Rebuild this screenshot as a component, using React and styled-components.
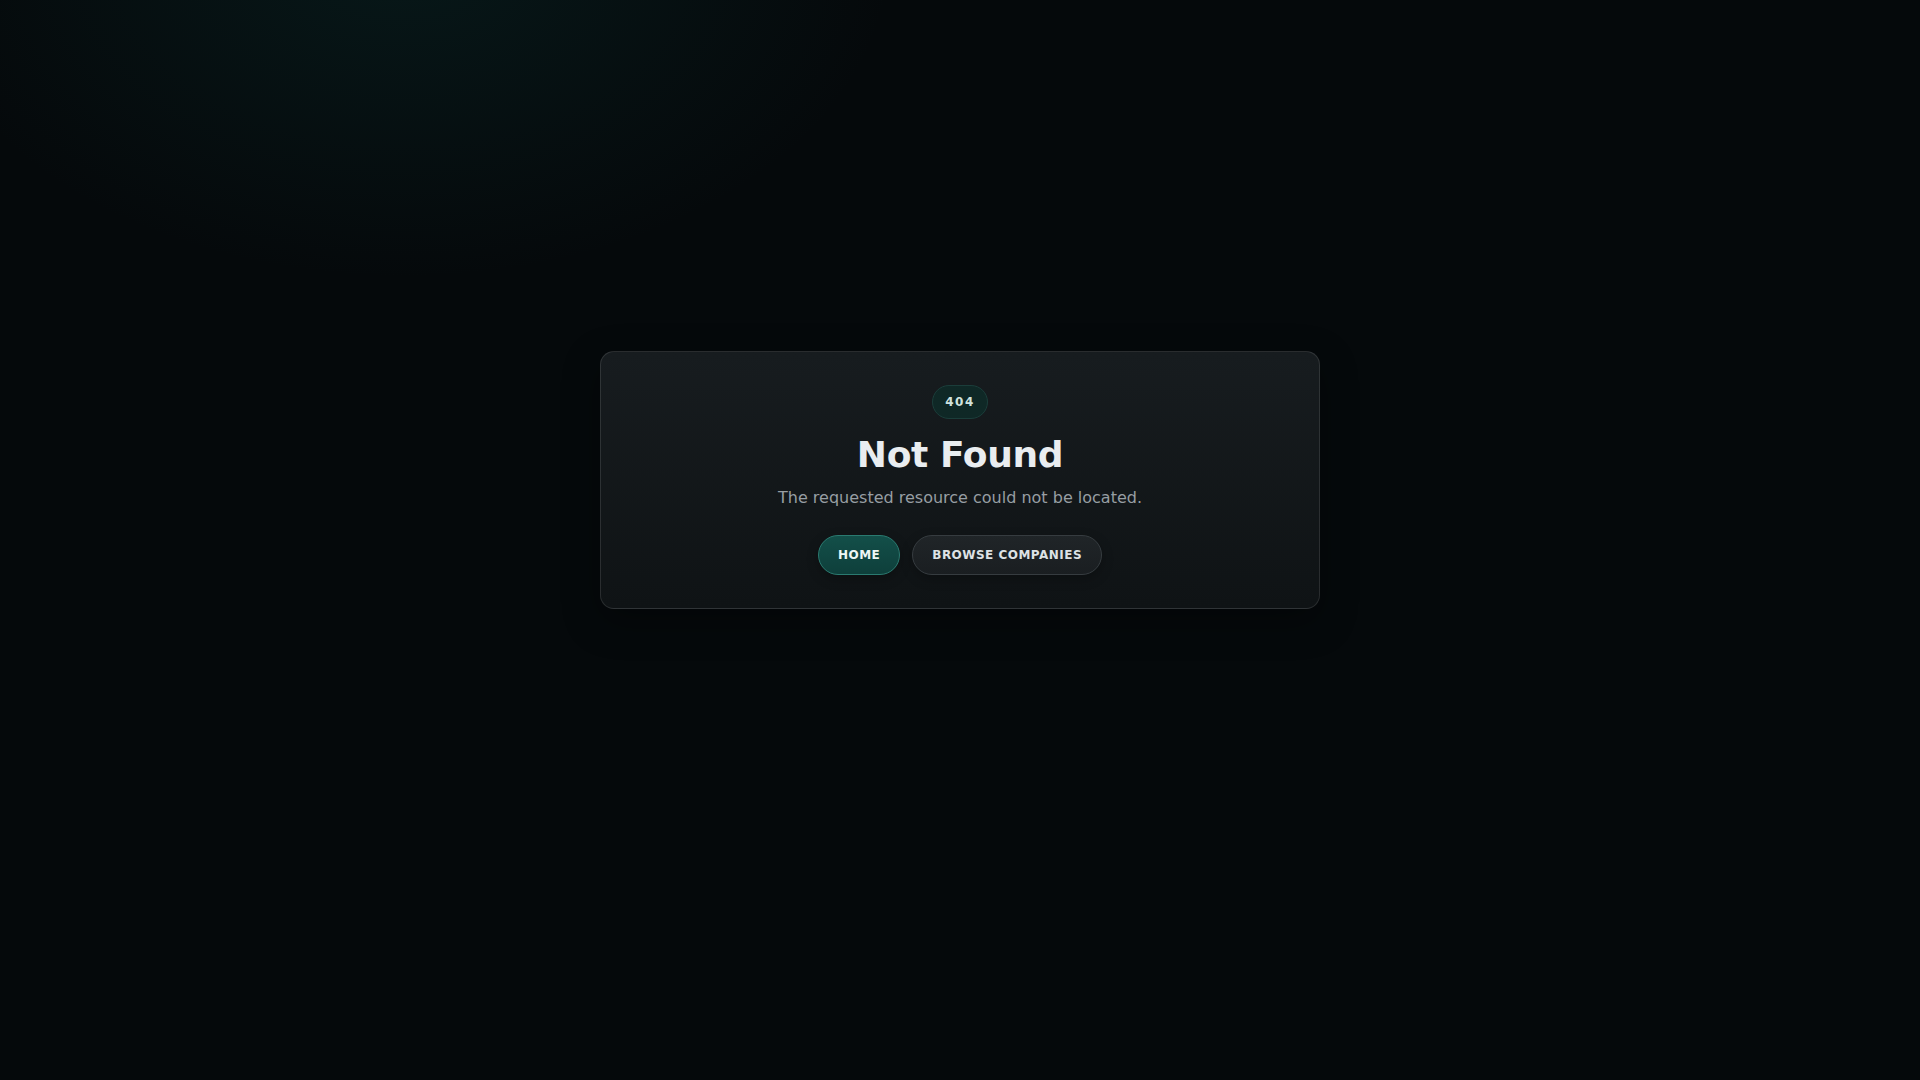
import React from "react";
import styled, { createGlobalStyle } from "styled-components";

const Global = createGlobalStyle`
  html, body { margin: 0; padding: 0; background: #05090b; }
  body { font-family: "DejaVu Sans", "Noto Sans", sans-serif; }
  * { box-sizing: border-box; }
`;

const Page = styled.main`
  min-height: 100vh;
  display: flex;
  align-items: center;
  justify-content: center;
  padding-bottom: 120px;
  background:
    radial-gradient(ellipse 700px 460px at 21% -4%, rgba(18, 96, 92, 0.17), rgba(18, 96, 92, 0) 70%),
    #05090b;
`;

const Card = styled.section`
  width: 720px;
  padding: 33px 40px 33px;
  border-radius: 14px;
  border: 1px solid rgba(255, 255, 255, 0.11);
  background: linear-gradient(180deg, #171c1f 0%, #0f1315 100%);
  box-shadow: 0 12px 36px rgba(0, 0, 0, 0.35);
  display: flex;
  flex-direction: column;
  align-items: center;
  text-align: center;
`;

const Code = styled.span`
  display: inline-block;
  padding: 8px 12px;
  border-radius: 999px;
  font-size: 12px;
  line-height: 16px;
  font-weight: 700;
  letter-spacing: 0.12em;
  color: #cfe3df;
  background: #0f2826;
  border: 1px solid #1b3d3a;
`;

const Title = styled.h1`
  margin: 16px 0 10px;
  font-size: 36px;
  line-height: 1.1;
  font-weight: 700;
  letter-spacing: -0.01em;
  color: #e9edf0;
`;

const Subtitle = styled.p`
  margin: 0;
  font-size: 16px;
  line-height: 1.6;
  color: #979ea3;
`;

const Actions = styled.div`
  margin-top: 24px;
  display: flex;
  gap: 12px;
  justify-content: center;
`;

const Button = styled.a`
  display: inline-flex;
  align-items: center;
  height: 40px;
  padding: 0 19px;
  border-radius: 999px;
  font-size: 12px;
  font-weight: 700;
  letter-spacing: 0.04em;
  text-decoration: none;
  cursor: pointer;
  color: ${(p) => (p.$primary ? "#eef7f5" : "#dde2e5")};
  background: ${(p) =>
    p.$primary
      ? "linear-gradient(180deg, #134f49 0%, #0e3f3b 100%)"
      : "linear-gradient(180deg, #202528 0%, #1a1e21 100%)"};
  border: 1px solid ${(p) => (p.$primary ? "#2a7a70" : "#363c40")};
  box-shadow: 0 4px 12px rgba(0, 0, 0, 0.25);
`;

export default function App() {
  return (
    <>
      <Global />
      <Page>
        <Card>
          <Code>404</Code>
          <Title>Not Found</Title>
          <Subtitle>The requested resource could not be located.</Subtitle>
          <Actions>
            <Button $primary href="#">HOME</Button>
            <Button href="#">BROWSE COMPANIES</Button>
          </Actions>
        </Card>
      </Page>
    </>
  );
}
